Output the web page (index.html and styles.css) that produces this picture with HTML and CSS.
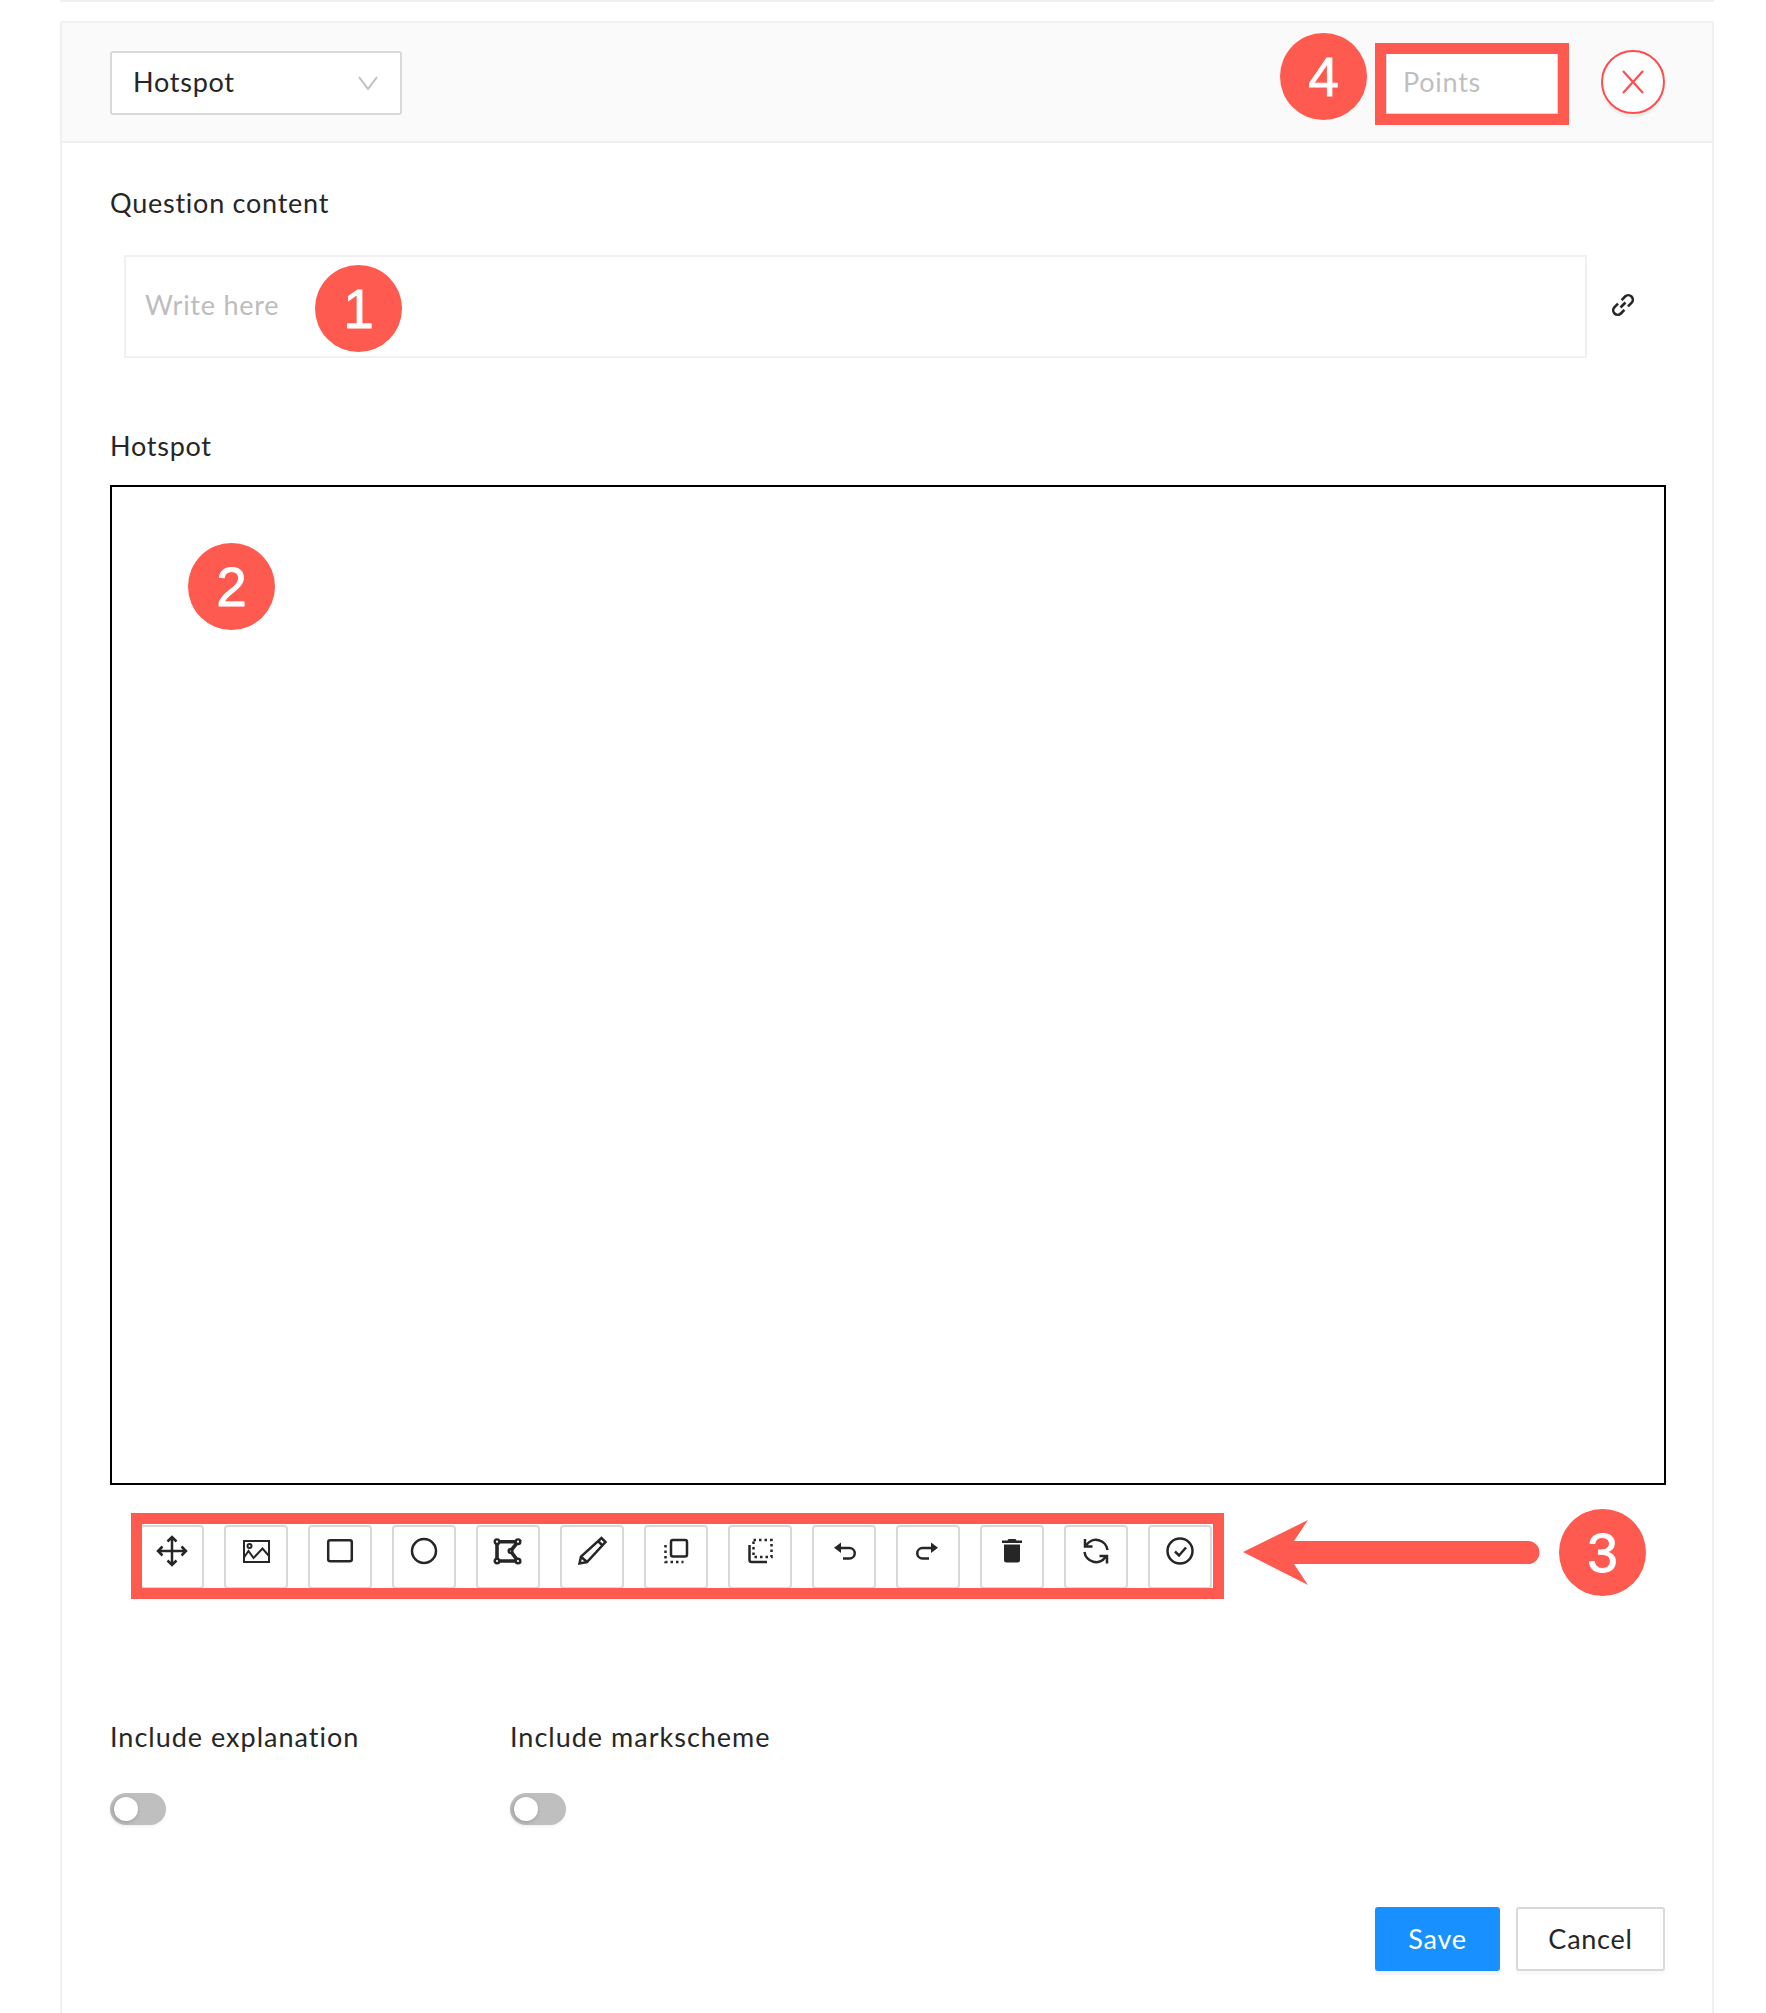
FILE: index.html
```html
<!DOCTYPE html>
<html lang="en">
<head>
<meta charset="utf-8">
<title>Hotspot question</title>
<link rel="stylesheet" href="styles.css">
</head>
<body>
<div class="page">
  <div class="prev-card"></div>
  <section class="card">
    <header class="card-head">
      <div class="select">
        <span>Hotspot</span>
        <svg class="chev" width="20" height="14" viewBox="0 0 20 14"><path d="M1 1l9 12 9-12"/></svg>
      </div>
      <div class="points"><span>Points</span></div>
      <button class="close" type="button">
        <svg width="24" height="24" viewBox="0 0 24 24"><path d="M2 1l20 22M22 1L2 23"/></svg>
      </button>
    </header>
    <div class="card-body">
      <div class="label">Question content</div>
      <div class="editor-row">
        <div class="editor">Write here</div>
        <svg class="link" width="26" height="26" viewBox="0 0 26 26"><g transform="rotate(-45 13 13)"><path d="M10.500 8.500H5.500a4.500 4.500 0 0 0 0 9h5M15.500 8.500h5a4.500 4.500 0 0 1 0 9h-5M9.500 13h7"/></g></svg>
      </div>
      <div class="label label-hotspot">Hotspot</div>
      <div class="canvas"></div>
      <div class="toolbar">
        <button class="tool" type="button"><svg viewBox="0 0 32 32"><path d="M16 2v28M2 16h28M11.500 6.500L16 2l4.500 4.500M11.500 25.500L16 30l4.500-4.500M6.500 11.500L2 16l4.500 4.500M25.500 11.500L30 16l-4.500 4.500"/></svg></button>
        <button class="tool" type="button"><svg viewBox="0 0 32 32"><path class="thin" d="M4 6h25v21H4z"/><circle class="thin" cx="9.500" cy="11" r="2"/><path class="thin" d="M4 22.500L8.500 16l5 7 9-9.500 6.500 7.500"/></svg></button>
        <button class="tool" type="button"><svg viewBox="0 0 32 32"><rect x="4.200" y="5.200" width="23.600" height="21" rx="2"/></svg></button>
        <button class="tool" type="button"><svg viewBox="0 0 32 32"><circle cx="16" cy="16" r="12"/></svg></button>
        <button class="tool" type="button"><svg viewBox="0 0 32 32"><path class="heavy" d="M5 6.700h21L18.500 16l7.500 10H5z"/><circle class="dot" cx="5" cy="6.700" r="2.300"/><circle class="dot" cx="26" cy="6.700" r="2.300"/><circle class="dot" cx="5" cy="26" r="2.300"/><circle class="dot" cx="26" cy="26" r="2.300"/><circle class="dot" cx="18.500" cy="16" r="1.800"/></svg></button>
        <button class="tool" type="button"><svg viewBox="0 0 32 32"><path d="M3.500 28.500L5 21.700 25.500 3l4 4L11 27zM5 21.700l6 5.300M22 6l4.500 4.500"/></svg></button>
        <button class="tool" type="button"><svg viewBox="0 0 32 32"><rect x="11" y="5" width="16" height="16.500" rx="2"/><path class="dots" d="M5.500 10v17h18"/></svg></button>
        <button class="tool" type="button"><svg viewBox="0 0 32 32"><path class="dots" d="M9.500 5h18v17h-18z"/><path d="M5.500 10v15a2 2 0 0 0 2 2H23"/></svg></button>
        <button class="tool" type="button"><svg viewBox="0 0 32 32"><path class="solid" d="M6 12.800l7-5.300v10.500z"/><path d="M11 13h10.500a5.200 5.200 0 0 1 0 10.500H15"/></svg></button>
        <button class="tool" type="button"><svg viewBox="0 0 32 32"><path class="solid" d="M26 12.800l-7-5.300v10.500z"/><path d="M21 13H10.500a5.200 5.200 0 0 0 0 10.500H17"/></svg></button>
        <button class="tool" type="button"><svg viewBox="0 0 32 32"><path class="solid" d="M12.500 4h7l1 1.500H26V8H6V5.500h5.500zM8 9.500h16V25a2.500 2.500 0 0 1-2.500 2.500h-11A2.500 2.500 0 0 1 8 25z"/></svg></button>
        <button class="tool" type="button"><svg viewBox="0 0 32 32"><path d="M6.500 10A11.500 11.500 0 0 1 27.500 15M5 4v7.500h7.500M25.500 22A11.500 11.500 0 0 1 4.500 17M27 28.500V21h-7.500"/></svg></button>
        <button class="tool" type="button"><svg viewBox="0 0 32 32"><circle cx="16" cy="16" r="12.500"/><path d="M11 16.500l4 4 7-8"/></svg></button>
      </div>
      <div class="switches">
        <div class="switch-col">
          <div class="label label-switch">Include explanation</div>
          <div class="toggle"><span class="knob"></span></div>
        </div>
        <div class="switch-col">
          <div class="label label-switch">Include markscheme</div>
          <div class="toggle"><span class="knob"></span></div>
        </div>
      </div>
      <div class="actions">
        <button class="btn btn-primary" type="button">Save</button>
        <button class="btn" type="button">Cancel</button>
      </div>
    </div>
  </section>

  <div class="frame frame-points"></div>
  <div class="frame frame-tools"></div>
  <svg class="arrow" width="298" height="70" viewBox="0 0 298 70"><path d="M1 33L66 1 52 22H286a11 11 0 0 1 0 23H52l14 21z"/></svg>
  <div class="badge badge-1">1</div>
  <div class="badge badge-2">2</div>
  <div class="badge badge-3">3</div>
  <div class="badge badge-4">4</div>
</div>
</body>
</html>
```
FILE: styles.css
```css
* { box-sizing: border-box; }
html, body { margin: 0; padding: 0; background: #fff; }
html { height: 2013px; overflow: hidden; }
body { font-family: "Lato", "Noto Sans", sans-serif; color: #262626; font-size: 27px; letter-spacing: .75px; }
.page { position: relative; height: 2013px; overflow: hidden; }

.prev-card { height: 2px; margin: 0 52px 0 60px; background: #f0f0f0; }

.card { margin: 19px 52px 0 60px; border: 2px solid #f0f0f0; border-radius: 3px; height: 2100px; }
.card-head { display: flex; align-items: flex-start; height: 120px; padding: 28px 47px 0 48px; background: #fafafa; border-bottom: 2px solid #f0f0f0; }
.select { display: flex; align-items: center; justify-content: space-between; width: 292px; height: 64px; padding: 0 22px 3px 21px; background: #fff; border: 2px solid #d9d9d9; border-radius: 3px; }
.chev { margin-top: 3px; }
.chev path { fill: none; stroke: #bfbfbf; stroke-width: 2; }
.points { display: flex; align-items: center; width: 174px; height: 64px; margin-left: auto; padding: 0 0 3px 16px; background: #fff; border: 2px solid #d9d9d9; color: #bfbfbf; }
.close { display: flex; align-items: center; justify-content: center; width: 64px; height: 64px; margin: -1px 0 0 42px; padding: 0; background: #fff; border: 2px solid #ff4d4f; border-radius: 50%; box-shadow: 0 4px 0 rgba(0, 0, 0, .04); }
.close path { fill: none; stroke: #ff4d4f; stroke-width: 2.200; }

.card-body { padding: 40px 46px 0 48px; }
.label { height: 40px; line-height: 40px; }
.label-switch { letter-spacing: 1px; }
.editor-row { display: flex; align-items: center; margin: 32px 0 0 14px; }
.editor { width: 1463px; height: 103px; padding: 0 0 4px 19px; display: flex; align-items: center; border: 2px solid #f0f0f0; color: #bdbdbd; }
.link { margin: -4px 0 0 23px; overflow: visible; }
.link path { fill: none; stroke: #262626; stroke-width: 2.600; }
.label-hotspot { margin-top: 68px; }
.canvas { height: 1000px; margin-top: 19px; border: 2px solid #000; background: #fff; }

.toolbar { display: flex; gap: 20px; margin: 40px 0 0 30px; }
.tool { display: flex; align-items: flex-start; justify-content: center; width: 64px; height: 64px; padding: 8px 0 0; background: #fff; border: 2px solid #d9d9d9; border-radius: 4px; }
.tool svg { display: block; width: 32px; height: 32px; }
.tool svg * { fill: none; stroke: #262626; stroke-width: 2.500; }
.tool svg .thin { stroke-width: 2; }
.tool svg .heavy { stroke-width: 3.600; }
.tool svg .dot { fill: #fff; stroke-width: 2.400; }
.tool svg .solid { fill: #262626; stroke: none; }
.tool svg .dots { stroke-dasharray: 2.500 3; }

.switches { display: flex; margin-top: 128px; }
.switch-col { width: 400px; }
.toggle { position: relative; width: 56px; height: 32px; margin-top: 36px; background: #bfbfbf; border-radius: 16px; box-shadow: 0 2px 3px rgba(0, 0, 0, .05); }
.knob { position: absolute; left: 4px; top: 4px; width: 24px; height: 24px; background: #fff; border-radius: 50%; box-shadow: -1px 1px 4px rgba(0, 35, 11, .25); }

.actions { display: flex; justify-content: flex-end; gap: 16px; margin: 82px 1px 0 0; }
.btn { height: 64px; width: 149px; padding: 0 0 2px; background: #fff; border: 2px solid #d9d9d9; border-radius: 3px; font: inherit; letter-spacing: inherit; color: #262626; box-shadow: 0 4px 0 rgba(0, 0, 0, .02); }
.btn-primary { width: 125px; background: #1890ff; border-color: #1890ff; color: #fff; box-shadow: 0 4px 0 rgba(0, 0, 0, .045); }

.frame { position: absolute; border: 11px solid #ff5a4f; }
.frame-points { left: 1375px; top: 43px; width: 194px; height: 82px; }
.frame-tools { left: 131px; top: 1513px; width: 1093px; height: 86px; }
.arrow { position: absolute; left: 1242px; top: 1519px; }
.arrow path { fill: #ff5a4f; }
.badge { position: absolute; display: flex; align-items: center; justify-content: center; width: 87px; height: 87px; background: #ff5a4f; border-radius: 50%; color: #fff; font-family: "Liberation Sans", Arial, sans-serif; font-size: 55px; letter-spacing: 0; -webkit-text-stroke: .8px #fff; }
.badge-1 { left: 315px; top: 265px; }
.badge-2 { left: 188px; top: 543px; }
.badge-3 { left: 1559px; top: 1509px; }
.badge-4 { left: 1280px; top: 33px; }
```
